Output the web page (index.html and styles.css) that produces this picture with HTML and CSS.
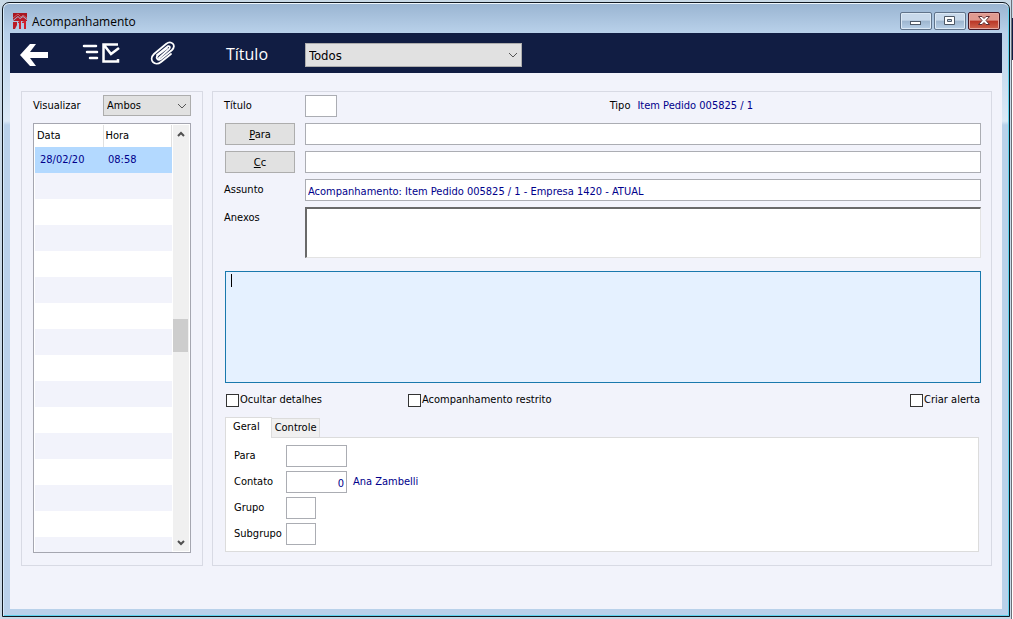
FILE: index.html
```html
<!DOCTYPE html>
<html lang="pt-BR">
<head>
<meta charset="utf-8">
<title>Acompanhamento</title>
<link rel="stylesheet" href="styles.css">
</head>
<body>
<div class="window">
  <header class="titlebar">
    <svg class="app-icon" viewBox="0 0 14 16" aria-hidden="true">
      <path fill="#a91620" d="M0 0H14V6L10 3L7 5L5 3L0 7Z"/>
      <path fill="none" stroke="#e8a0a4" stroke-width="0.500" d="M0 5L5 1L8 4L10 2L14 5"/>
      <path fill="#b91a25" d="M0 8L5 4L7 6L10 4L14 7V8H0ZM0 9H4V12L2 16H0Z"/>
      <path fill="#d0212c" d="M5 9L8 7V16H6V10H5ZM9 9L13 7V16H11V10H9Z"/>
    </svg>
    <h1 class="window-title">Acompanhamento</h1>
    <div class="window-buttons">
      <button class="win-btn" type="button" aria-label="Minimizar"><svg viewBox="0 0 30 16"><rect x="9.500" y="8.500" width="10" height="3" fill="#fff" stroke="#4d5866"/></svg></button>
      <button class="win-btn" type="button" aria-label="Maximizar"><svg viewBox="0 0 30 16"><path fill="#fff" fill-rule="evenodd" stroke="#4d5866" d="M9.500 3.500H19.500V11.500H9.500ZM12.500 6.500V8.500H16.500V6.500Z"/></svg></button>
      <button class="win-btn close" type="button" aria-label="Fechar"><svg viewBox="0 0 30 16"><path fill="#fff" stroke="#5d3035" d="M9.500 3.500H13L15 5.500L17 3.500H20.500L17 7.500L20.500 11.500H17L15 9.500L13 11.500H9.500L13 7.500Z"/></svg></button>
    </div>
  </header>

  <main class="client">
    <div class="toolbar">
      <button class="tool tool-back" type="button" aria-label="Voltar"><svg viewBox="0 0 28 24"><path fill="#fff" d="M0 12L10 1H16L10 9H28V15H10L16 23H10Z"/></svg></button>
      <button class="tool tool-send" type="button" aria-label="Enviar"><svg viewBox="0 0 38 22"><g fill="none" stroke="#fff" stroke-width="2.500"><path stroke-linecap="round" d="M2 4H14M5 10H15M8 16H15"/><path d="M36 2.500H21.500V19.500H36V17M22 3L29 12L37 6"/></g></svg></button>
      <button class="tool tool-clip" type="button" aria-label="Anexar"><svg viewBox="0 0 26 24"><path fill="none" stroke="#fff" stroke-width="1.800" stroke-linecap="round" d="M17 7L8 14C5 17 8 20 11 18L22 9C27 4 21-1 16 3L4 13C-2 19 5 26 11 21L21 13M9 17L19 8C21 6 19 4 17 6L7 14"/></svg></button>
      <label class="toolbar-label" for="filtro">Título</label>
      <select class="toolbar-select" id="filtro"><option>Todos</option></select>
    </div>

    <div class="panels">
      <section class="panel list-panel">
        <div class="view-row">
          <label for="visualizar">Visualizar</label>
          <select id="visualizar"><option>Ambos</option></select>
        </div>
        <div class="list">
          <table class="grid">
            <thead><tr><th class="col-date">Data</th><th>Hora</th></tr></thead>
            <tbody>
              <tr class="selected"><td>28/02/20</td><td>08:58</td></tr>
              <tr><td></td><td></td></tr><tr><td></td><td></td></tr><tr><td></td><td></td></tr>
              <tr><td></td><td></td></tr><tr><td></td><td></td></tr><tr><td></td><td></td></tr>
              <tr><td></td><td></td></tr><tr><td></td><td></td></tr><tr><td></td><td></td></tr>
              <tr><td></td><td></td></tr><tr><td></td><td></td></tr><tr><td></td><td></td></tr>
              <tr><td></td><td></td></tr><tr><td></td><td></td></tr><tr><td></td><td></td></tr>
            </tbody>
          </table>
          <div class="scrollbar">
            <button type="button" aria-label="Rolar para cima"><svg viewBox="0 0 8 6"><path d="M1 5L4 2L7 5"/></svg></button>
            <div class="track"><div class="thumb"></div></div>
            <button type="button" aria-label="Rolar para baixo"><svg viewBox="0 0 8 6"><path d="M1 1L4 4L7 1"/></svg></button>
          </div>
        </div>
      </section>

      <section class="panel form-panel">
        <div class="fields">
          <label for="titulo">Título</label>
          <div class="title-row">
            <input class="short" id="titulo" type="text">
            <p class="type"><span>Tipo</span><span class="value">Item Pedido 005825 / 1</span></p>
          </div>
          <button class="push" type="button"><u>P</u>ara</button>
          <input type="text" aria-label="Para">
          <button class="push" type="button"><u>C</u>c</button>
          <input type="text" aria-label="Cc">
          <label for="assunto">Assunto</label>
          <input id="assunto" type="text" value="Acompanhamento: Item Pedido 005825 / 1 - Empresa 1420 - ATUAL">
          <label class="top-label" for="anexos">Anexos</label>
          <textarea class="attachments" id="anexos"></textarea>
        </div>
        <div class="editor"><textarea class="message" aria-label="Mensagem"></textarea><span class="caret"></span></div>
        <div class="checks">
          <label><input type="checkbox">Ocultar detalhes</label>
          <label><input type="checkbox">Acompanhamento restrito</label>
          <label class="alert"><input type="checkbox">Criar alerta</label>
        </div>
        <div class="tabs" role="tablist">
          <button class="tab active" type="button" role="tab" aria-selected="true">Geral</button>
          <button class="tab" type="button" role="tab" aria-selected="false">Controle</button>
        </div>
        <div class="tab-body" role="tabpanel">
          <label for="g-para">Para</label><input class="medium" id="g-para" type="text">
          <label for="contato">Contato</label><div class="contact"><input class="medium number" id="contato" type="text" value="0"><span class="value">Ana Zambelli</span></div>
          <label for="grupo">Grupo</label><input class="small" id="grupo" type="text">
          <label for="subgrupo">Subgrupo</label><input class="small" id="subgrupo" type="text">
        </div>
      </section>
    </div>
  </main>
</div>
</body>
</html>
```
FILE: styles.css
```css
* { box-sizing: border-box; }

body {
  margin: 0;
  padding: 2px 3px 2px 2px;
  min-height: 100vh;
  display: flex;
  background:
    linear-gradient(#c9d9e6 18px, #111d43 18px 60px, #fff 60px) right top / 1px 100% no-repeat,
    linear-gradient(#6b7078, #6b7078) right 1px top / 1px 100% no-repeat,
    #c9d9e6;
  color: #000;
  font: 11px/16px "DejaVu Sans Condensed", "DejaVu Sans", sans-serif;
}

button, input, select, textarea { font: inherit; color: inherit; margin: 0; border-radius: 0; }
button { padding: 0; border: 0; background: none; }
svg { display: block; }

.window {
  flex: 1;
  display: flex;
  flex-direction: column;
  padding: 1px 7px 7px;
  border: 1px solid #101820;
  border-radius: 7px 7px 0 0;
  box-shadow: inset 0 1px #eef6fc, inset 1px 0 #d5eafa, inset -1px -1px #5fd3ee;
  background: linear-gradient(#99b4d1, #b9d1ea 30px, #dbe9f6 118px, #b9d1ea 122px);
}

.titlebar { display: flex; height: 29px; padding: 0 2px 0 3px; }
.app-icon { width: 14px; height: 16px; margin-top: 9px; }
.window-title { flex: 1; margin: 9px 0 0 5px; font: 12px/17px "Open Sans", "Noto Sans", sans-serif; }
.window-buttons { display: flex; gap: 2px; margin-top: 8px; }
.win-btn {
  width: 32px;
  height: 18px;
  border: 1px solid #60738a;
  border-radius: 2px;
  background: linear-gradient(#c8d9eb 45%, #9db5ce 50%, #b8d0e8);
  box-shadow: inset 0 0 0 1px #dce9f5;
}
.win-btn svg { width: 30px; height: 16px; }
.win-btn.close { border-color: #431725; background: linear-gradient(#df9a90 45%, #b93525 50%, #cf6650); box-shadow: inset 0 0 0 1px #e5aaa2; }

.client { flex: 1; display: flex; flex-direction: column; background: #f2f3fb; }
.toolbar { display: flex; align-items: center; height: 40px; padding-left: 10px; background: #111d43; color: #fff; }
.tool-back { width: 28px; margin: 3px 34px 0 0; }
.tool-send { width: 38px; margin-right: 30px; }
.tool-clip { width: 26px; margin-right: 50px; }
.toolbar-label { width: 79px; padding-top: 2px; font: 16px/22px "Open Sans", "Noto Sans", sans-serif; }

select {
  appearance: none;
  border: 1px solid #adadad;
  color: #000;
  background: #e1e1e1 url("data:image/svg+xml,%3Csvg xmlns='http://www.w3.org/2000/svg' width='10' height='6'%3E%3Cpath d='M1 1L5 5L9 1' fill='none' stroke='%23555'/%3E%3C/svg%3E") no-repeat right 3px center;
}
.toolbar-select { width: 217px; height: 24px; padding: 2px 3px 0; font-size: 13px; margin-top: 4px; }

.panels { flex: 1; display: grid; align-items: start; grid-template-columns: 182px 1fr; gap: 9px; padding: 18px 10px 43px 11px; }
.panel { border: 1px solid #d8dae4; }

.list-panel { padding: 3px 11px 12px; }
.view-row { display: flex; justify-content: space-between; align-items: center; margin-bottom: 7px; }
.view-row select { width: 88px; height: 21px; padding: 1px 3px 0; }
.list { display: flex; height: 430px; padding: 1px; border: 1px solid #a5a6b0; background: #fff; overflow: hidden; }
.grid { flex: 1; align-self: flex-start; border-collapse: collapse; table-layout: fixed; }
.grid th { height: 22px; padding: 0 2px; text-align: left; font-weight: 400; border-right: 1px solid #e0e0e0; }
.col-date { width: 68px; }
.grid td { height: 26px; padding: 0 5px; }
.grid tbody tr:nth-child(even) { background: #f2f3fb; }
.grid .selected { background: #b3d9ff; color: #00008b; }
.scrollbar { display: flex; flex-direction: column; width: 16px; margin-left: 1px; background: #f0f0f0; }
.scrollbar button { height: 17px; display: grid; place-items: center; }
.scrollbar svg { width: 8px; height: 6px; fill: none; stroke: #505050; stroke-width: 2; }
.track { flex: 1; padding-top: 177px; }
.thumb { height: 33px; width: 15px; background: #cdcdcd; }

.form-panel { padding: 3px 10px 13px 12px; }
.fields { display: grid; grid-template-columns: 70px 1fr; gap: 6px 10px; align-items: center; }
.fields label { margin-left: -1px; }
input, textarea { display: block; width: 100%; border: 1px solid #abadb3; background: #fff; color: #00008b; outline: 0; }
input { height: 22px; padding: 2px 2px 0; }
textarea { resize: none; }
.title-row { display: flex; align-items: center; justify-content: space-between; }
.short { width: 32px; }
.type { display: flex; gap: 7px; margin: 0; padding-right: 228px; }
.value { color: #00008b; }
.push { height: 22px; padding-top: 1px; border: 1px solid #adadad; background: #e1e1e1; }
.top-label { align-self: start; padding-top: 3px; }
.attachments { height: 51px; border: 1px solid #e3e3e3; border-top: 2px solid #696969; border-left: 2px solid #696969; }
.editor { position: relative; margin-top: 13px; }
.message { height: 112px; border-color: #1a79ad; background: #e5f1ff; }
.caret { position: absolute; left: 6px; top: 3px; width: 1px; height: 13px; background: #000; }

.checks { display: flex; margin: 9px 1px; }
.checks label { display: flex; align-items: center; gap: 1px; width: 182px; }
.checks .alert { width: auto; margin-left: auto; }
input[type="checkbox"] { appearance: none; width: 13px; height: 13px; padding: 0; border: 1px solid #333; }

.tabs { display: flex; align-items: flex-end; }
.tab { height: 19px; padding: 0 3px; border: 1px solid #dcdcdc; border-bottom: 0; border-left: 0; background: #f0f0f0; }
.tab.active { height: 21px; margin-bottom: -1px; padding: 0 11px 2px 7px; border-left: 1px solid #dcdcdc; background: #fff; z-index: 1; }
.tab-body {
  display: grid;
  grid-template-columns: 48px 1fr;
  gap: 4px;
  align-items: center;
  margin-right: 2px;
  padding: 7px 8px 6px;
  border: 1px solid #dcdcdc;
  background: #fff;
}
.medium { width: 61px; }
.small { width: 30px; }
.number { text-align: right; }
.contact { display: flex; align-items: center; gap: 6px; }
```
